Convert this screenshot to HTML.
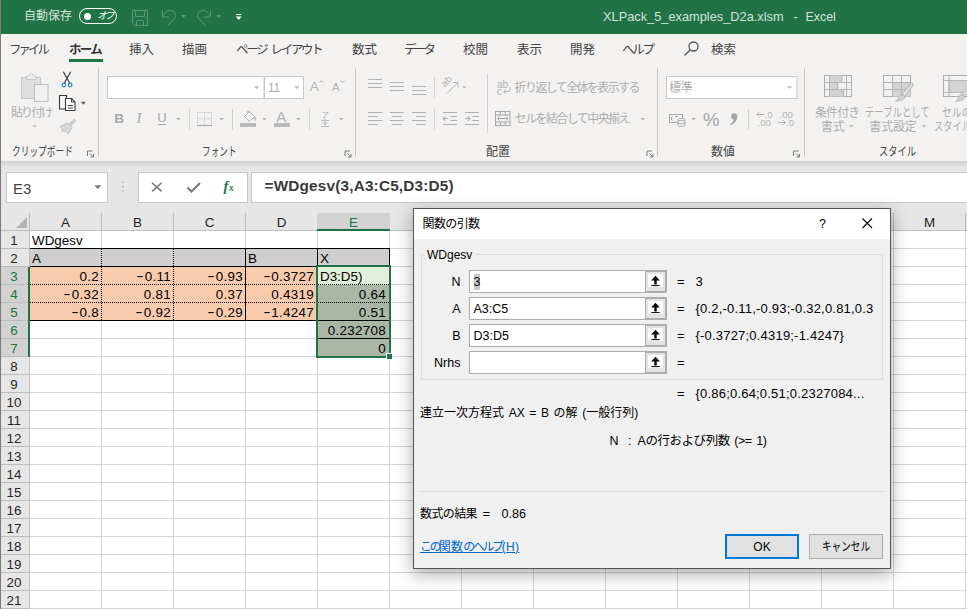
<!DOCTYPE html>
<html lang="ja">
<head>
<meta charset="utf-8">
<title>XLPack_5_examples_D2a.xlsm - Excel</title>
<style>
*{box-sizing:border-box;margin:0;padding:0}
html,body{width:967px;height:609px;overflow:hidden;background:#fff}
body{position:relative;font-family:"Liberation Sans","Noto Sans CJK JP",sans-serif;font-size:12px;color:#444}
.abs{position:absolute}
#win{position:absolute;left:0;top:0;width:967px;height:609px;overflow:hidden;background:#fff}
#lborder{position:absolute;left:0;top:0;width:1px;height:609px;background:#7b7b7b;z-index:50}
/* title bar */
#title{position:absolute;left:0;top:0;width:967px;height:34px;background:#217346;color:#d5e6dc}
#title .t{position:absolute;white-space:nowrap;font-size:12px;line-height:14px}
/* tabs */
#tabs{position:absolute;left:0;top:34px;width:967px;height:28px;background:#f3f2f1}
#tabs span{position:absolute;top:9px;font-size:12.5px;line-height:15px;color:#444;white-space:nowrap}
#tabs span.k{letter-spacing:-3px}
/* ribbon */
#ribbon{position:absolute;left:0;top:62px;width:967px;height:99px;background:#f3f2f1}
#ribbon .rt{position:absolute;font-size:12px;line-height:16px;color:#444;white-space:nowrap;transform-origin:0 50%;display:inline-block}
#ribbon .dim{color:#adadad}
/* formula bar */
#fbar{position:absolute;left:0;top:161px;width:967px;height:52px;background:#e6e6e6}
#fshadow{position:absolute;left:0;top:0;width:967px;height:6px;background:linear-gradient(#cfcfcf,#e6e6e6)}
.fbox{position:absolute;top:11px;height:31px;background:#fff;border:1px solid #c8c8c8}
/* sheet */
#sheet{position:absolute;left:0;top:213px;width:967px;height:396px;background:#fff;font-family:"Liberation Sans","IPAGothic","Noto Sans CJK JP",sans-serif;font-size:13.4px;color:#000}
#colhead{position:absolute;left:0;top:0;width:967px;height:18px;background:#e6e6e6;border-bottom:1px solid #bfbfbf}
#colhead i{position:absolute;top:0;width:1px;height:17px;background:#bcbcbc}
#colhead b{position:absolute;top:0;height:17px;width:71px;text-align:center;font-weight:normal;line-height:20px;color:#262626}
#colhead b.sel{background:#d2d2d2;color:#217346;border-bottom:2px solid #217346;height:18px;margin-left:-1px;width:73px;z-index:2}
#corner{position:absolute;left:16px;top:4px;width:0;height:0;border-left:11px solid transparent;border-bottom:11px solid #b4b4b4}
#rowhead{position:absolute;left:0;top:18px;width:30px;height:378px;background:#e6e6e6;border-right:1px solid #bfbfbf;
 background-image:linear-gradient(to bottom,transparent 17px,#bcbcbc 17px);background-size:100% 18px}
#rowhead b{position:absolute;left:0;width:28px;height:17px;text-align:center;font-weight:normal;line-height:20px;color:#262626}
#rowhead b.sel{background:#d2d2d2;color:#217346;width:30px;padding-right:2px}
#cells{position:absolute;left:30px;top:18px;width:937px;height:378px;background-color:#fff;
 background-image:linear-gradient(to right,transparent 71px,#d4d4d4 71px),linear-gradient(to bottom,transparent 17px,#d4d4d4 17px);background-size:72px 100%,100% 18px}
#cells .c{position:absolute;height:17px;line-height:20px;white-space:nowrap;overflow:hidden;padding:0 3px 0 2px}
#cells .r{text-align:right;letter-spacing:.3px}
#cells .m{font-style:normal;display:inline-block;position:relative;top:-1px;transform:scaleX(1.700);margin:0 1.700px 0 1.500px}
#cells .ln{position:absolute;background:#000}
#cells .dv{position:absolute;width:1px;background-image:linear-gradient(to bottom,#000 1px,transparent 1px);background-size:1px 2px}
#cells .dh{position:absolute;height:1px;background-image:linear-gradient(to right,#000 1px,transparent 1px);background-size:2px 1px}
/* dialog */
#dlg{position:absolute;left:413px;top:208px;width:478px;height:361px;background:#f0f0f0;border:1px solid #555;box-shadow:0 5px 16px 1px rgba(0,0,0,.3);color:#000;z-index:20;font-size:12px}
#dlg .tb{position:absolute;left:0;top:0;width:476px;height:30px;background:#fff}
#dlg .x{position:absolute;white-space:nowrap;line-height:16px}
#dlg .v{font-size:13px;letter-spacing:.2px}
#dlg .gb{position:absolute;left:7px;top:45px;width:462px;height:126px;border:1px solid #dcdcdc}
#dlg .lg{position:absolute;left:10px;top:38px;padding:0 3px 0 3px;background:#f0f0f0;line-height:16px;font-size:12px}
#dlg .lb{position:absolute;left:0;width:46.500px;text-align:right;line-height:16px;font-size:12.500px}
#dlg .in{position:absolute;left:55px;width:198px;height:23px;background:#fff;border:1px solid #ababab}
#dlg .in b{position:absolute;right:-1px;top:-1px;width:22px;height:23px;background:#e3e3e3;border:1px solid #adadad;border-width:2px 2px 2px 1px}
#dlg .in b i{position:absolute;left:2px;top:2px;width:15px;height:13px;background:#fff}
#dlg .in span{position:absolute;left:3.500px;top:3px;line-height:16px;font-size:12.500px;white-space:nowrap}
#dlg .eq{position:absolute;left:263px;line-height:16px;font-size:13px}
#dlg .btn{position:absolute;top:325px;width:74px;height:25px;background:#e1e1e1;border:1px solid #adadad;text-align:center;line-height:25px;font-size:12px}
</style>
</head>
<body>
<div id="win">
  <div id="title">
    <span class="t" style="left:24px;top:9px;color:#d3e3da">自動保存</span>
    <div class="abs" style="left:79px;top:8px;width:38px;height:16px;border:1px solid #fff;border-radius:8px"></div>
    <div class="abs" style="left:83.500px;top:12.500px;width:7px;height:7px;border-radius:3.500px;background:#fff"></div>
    <span class="t" style="left:97px;top:10px;font-size:10px;line-height:12px;color:#fff;font-style:italic;letter-spacing:-2.500px">オフ</span>
    <svg class="abs" style="left:0;top:0" width="260" height="33" viewBox="0 0 260 33" fill="none" stroke="#5a9777" stroke-width="1">
      <path d="M132.500 10.500h15v15h-13l-2-2z"/><path d="M135.500 10.500v6h9v-6M136.500 25.500v-5h7v5"/>
      <path d="M162.500 10.500v6.500h6.500"/><path d="M162.800 16.800c1.500-3.600 4-6.300 7-6.300 3 0 5.700 2.200 5.700 5 0 2-1 3-2 4l-6 6"/>
      <path d="M181 15h5l-2.500 3z" fill="#5a9777" stroke="none"/>
      <path d="M210.500 10.500v6.500h-6.500"/><path d="M210.200 16.800c-1.500-3.600-4-6.300-7-6.300-3 0-5.700 2.200-5.700 5 0 2 1 3 2 4l6 6"/>
      <path d="M216.300 15h5l-2.500 3z" fill="#5a9777" stroke="none"/>
      <path d="M236 14.500h5.500" stroke="#fff"/><path d="M235.800 16.500h5.900l-2.950 3.600z" fill="#fff" stroke="none"/>
    </svg>
    <span class="t" id="tfn" style="left:603px;top:9px;font-size:12.800px;line-height:16px;color:#d3e3da">XLPack_5_examples_D2a.xlsm</span>
    <span class="t" style="left:793.500px;top:9px;font-size:13px;line-height:16px;color:#d3e3da">-</span>
    <span class="t" id="tex" style="left:805.500px;top:9px;font-size:12.400px;line-height:16px;color:#d3e3da">Excel</span>
  </div>
  <div id="tabs">
    <span style="left:9px" class="k">ファイル</span>
    <span style="left:69px;font-weight:bold;color:#333;letter-spacing:-1.75px">ホーム</span>
    <div class="abs" style="left:69px;top:25px;width:34px;height:3px;background:#217346"></div>
    <span style="left:129px">挿入</span>
    <span style="left:182px">描画</span>
    <span style="left:236px;letter-spacing:-2.300px;word-spacing:3px">ページ レイアウト</span>
    <span style="left:352px">数式</span>
    <span style="left:404px;letter-spacing:-2.75px">データ</span>
    <span style="left:463px">校閲</span>
    <span style="left:517px">表示</span>
    <span style="left:570px">開発</span>
    <span style="left:622px;letter-spacing:-2.25px">ヘルプ</span>
    <svg class="abs" style="left:683px;top:6px" width="18" height="18" viewBox="0 0 18 18" fill="none" stroke="#555" stroke-width="1.3"><circle cx="10.500" cy="6.500" r="4.500"/><path d="M7.300 9.800L1.500 15.500"/></svg>
    <span style="left:711px">検索</span>
  </div>
  <div id="ribbon">
<svg class="abs" style="left:0;top:0" width="967" height="99" viewBox="0 62 967 99" fill="none" stroke-width="1" font-family="Liberation Sans, sans-serif">
<path d="M98.5 68.500V156.500" stroke="#c8c6c4"/>
<path d="M355.5 68.500V156.500" stroke="#c8c6c4"/>
<path d="M657.5 68.500V156.500" stroke="#c8c6c4"/>
<path d="M804.5 68.500V156.500" stroke="#c8c6c4"/>
<rect x="21.500" y="77.500" width="19" height="21" fill="#dfdfdf" stroke="#c6c6c6"/>
<path d="M26.500 79.500v-3.500h2.500a2.200 2.200 0 0 1 4.400 0h2.500v3.500z" fill="#eee" stroke="#c6c6c6"/>
<rect x="34.500" y="84.500" width="13.500" height="17" fill="#f1f1f1" stroke="#bcbcbc"/>
<path d="M32 125.2H37L34.5 127.8z" fill="#c4c4c4" stroke="none"/>
<path d="M63.300 71.800L69.800 83.300M70.700 71.800L64.200 83.300" stroke="#3b3b3b" stroke-width="1.200"/>
<circle cx="63.900" cy="85" r="1.800" stroke="#2b88d8" stroke-width="1.200"/><circle cx="70.100" cy="85" r="1.800" stroke="#2b88d8" stroke-width="1.200"/>
<path d="M66.500 98v-2.500h-7v13.500h5.500" stroke="#3b3b3b" stroke-width="1.100"/>
<path d="M65.500 98.500h6l3.500 3.500v8.500h-9.500z" fill="#fff" stroke="#3b3b3b" stroke-width="1.100"/><path d="M71.500 98.500v3.500h3.500M68 105.500h5M68 108h5" stroke="#3b3b3b"/>
<path d="M80.8 101.7H85.8L83.3 104.8z" fill="#5a5a5a" stroke="none"/>
<path d="M74.300 119.300l1.400 1.400-4.600 5-1.800-1.800z" fill="#d4d4d4" stroke="#bdbdbd"/><path d="M60 126.500l7.500-3.500 4.500 4.500-3.500 6c-2-.5-3-1.500-3.500-3-1 1-2 1-3 .5.500-1 .500-2-.5-3-.5-.5-1-1-1.500-1.500z" fill="#d8d8d8" stroke="#bdbdbd"/>
<path d="M87.5 156.0v-5h5M90 153.5l3.500 3.500m0-3v3h-3" stroke="#7a7a7a" fill="none"/>
<rect x="107.500" y="76.500" width="156.500" height="22" fill="#fff" stroke="#c8c8c8"/><rect x="264.500" y="76.500" width="39" height="22" fill="#fff" stroke="#c8c8c8"/>
<path d="M253.8 86.2H259.2L256.5 88.9z" fill="#b9b9b9" stroke="none"/>
<path d="M294.1 86.2H299.5L296.8 88.9z" fill="#b9b9b9" stroke="none"/>
<text x="310" y="90.700" font-size="13" fill="#b2b2b2" stroke="none">A</text><path d="M319.500 82.500l2-2 2 2" stroke="#b2b2b2"/>
<text x="332" y="90.700" font-size="11.500" fill="#b2b2b2" stroke="none">A</text><path d="M340.500 80.500l2 2 2-2" stroke="#b2b2b2"/>
<text x="114.300" y="122.500" font-size="13.500" font-weight="bold" fill="#a9a9a9" stroke="none">B</text>
<text x="136.500" y="122.500" font-size="15" font-style="italic" font-family="Liberation Serif, serif" fill="#a9a9a9" stroke="none">I</text>
<text x="157.300" y="122.300" font-size="13" fill="#a9a9a9" stroke="none">U</text><path d="M157.800 124.500h8.200" stroke="#a9a9a9"/>
<path d="M176 117.9H180.8L178.4 120.6z" fill="#b9b9b9" stroke="none"/>
<path d="M189.500 109V129.700M232.500 109V129.700M309.500 109V129.700" stroke="#d0d0d0"/>
<path d="M197.500 112.500h14M197.500 118.800h14M197.500 112.500v13M204.500 112.500v13M211.500 112.500v13" stroke="#c4c4c4" stroke-dasharray="1 1"/><path d="M197 125.500h15" stroke="#a8a8a8" stroke-width="1.200"/>
<path d="M219 117.9H224.2L221.6 120.6z" fill="#b9b9b9" stroke="none"/>
<rect x="240" y="123" width="16" height="4" fill="#b9b9b9" stroke="none"/>
<path d="M244.500 116.500l5-5 5 5-5 5z M247.500 113.500c-1.500-2.500 1.500-3.500 2-1M254.800 117c1.500 1.500 1.500 3 0 3.500-1.200-.5-1.200-2 0-3.500z" stroke="#b2b2b2"/>
<path d="M261.9 117.9H267L264.45 120.6z" fill="#b9b9b9" stroke="none"/>
<text x="276.300" y="122" font-size="15" fill="#b2b2b2" stroke="none">A</text><rect x="274" y="123" width="16" height="4" fill="#b9b9b9" stroke="none"/>
<path d="M295.8 117.9H300.9L298.35 120.6z" fill="#b9b9b9" stroke="none"/>
<text x="321.500" y="118" font-size="7.500" font-family="Noto Sans CJK JP, sans-serif" fill="#b2b2b2" stroke="none">ア</text><path d="M321 120.500h8M322.500 123h5M321 126.500h8M325 119v7.500" stroke="#bcbcbc"/>
<path d="M338.8 117.9H343.9L341.35 120.6z" fill="#b9b9b9" stroke="none"/>
<path d="M345.0 156.0v-5h5M347.5 153.5l3.500 3.500m0-3v3h-3" stroke="#7a7a7a" fill="none"/>
<path d="M368 79.500h14M368 83.500h14M368 87.500h14 M390 82.500h14M390 86.500h14M390 90.500h14 M412 86.500h14M412 90.500h14M412 94.500h14" stroke="#b0b0b0" stroke-width="1.100"/>
<path d="M434.500 77.400V97.600M434.500 109V129.600" stroke="#d0d0d0"/><path d="M487.500 74V132.800" stroke="#d0d0d0"/>
<text transform="translate(444.800 87.500) rotate(-45)" font-size="10" fill="#b2b2b2" stroke="none">ab</text><path d="M447 93.500L457.500 83M453 82.500h5v5" stroke="#b2b2b2"/>
<path d="M462 86.2H466.8L464.4 88.6z" fill="#b9b9b9" stroke="none"/>
<text x="497" y="87.500" font-size="10" fill="#b2b2b2" stroke="none">ab</text><text x="497" y="95" font-size="10" fill="#b2b2b2" stroke="none">c</text><path d="M510 87v2.500a2 2 0 0 1-2 2h-4.500m2.200-2.200l-2.200 2.200 2.200 2.200" stroke="#b2b2b2"/>
<path d="M368 112.500h14M368 116.500h10M368 120.500h14M368 124.500h10 M390 112.500h14M392 116.500h10M390 120.500h14M392 124.500h10 M412 112.500h14M416 116.500h10M412 120.500h14M416 124.500h10" stroke="#b0b0b0" stroke-width="1.100"/>
<path d="M443 112.500h14M450.500 116.500h6.500M450.500 120.500h6.500M443 124.500h14M448 118.500h-5m2.200-2.200l-2.200 2.200 2.200 2.200 M465 112.500h14M472.500 116.500h6.500M472.500 120.500h6.500M465 124.500h14M465 118.500h5m-2.200-2.200l2.200 2.200-2.200 2.200" stroke="#b0b0b0" stroke-width="1.100"/>
<rect x="495.500" y="111.500" width="14.500" height="14" stroke="#a6a6a6"/><path d="M495.500 115h14.500M495.500 122h14.500M500.300 111.500v3.500M505.300 111.500v3.500M500.300 122v3.500M505.300 122v3.500M497.500 118.500h10.500m-8.500-2l-2 2 2 2m6.500-4l2 2-2 2" stroke="#a6a6a6"/>
<path d="M640.5 117.9H645.5L643.0 120.6z" fill="#b9b9b9" stroke="none"/>
<path d="M647.0 156.0v-5h5M649.5 153.5l3.500 3.500m0-3v3h-3" stroke="#7a7a7a" fill="none"/>
<rect x="666.500" y="76.500" width="130.500" height="22" fill="#fff" stroke="#c8c8c8"/>
<path d="M787 86.2H792L789.5 88.8z" fill="#b9b9b9" stroke="none"/>
<rect x="669.500" y="114.500" width="13" height="8" stroke="#a9a9a9"/><path d="M672.500 117h-1v3h1M675 116.500h3" stroke="#a9a9a9"/><path d="M678 119.500v5.500c0 1.800 7 1.800 7 0v-5.500" fill="#f3f2f1" stroke="#a9a9a9"/><ellipse cx="681.500" cy="119.500" rx="3.500" ry="1.300" fill="#f3f2f1" stroke="#a9a9a9"/><path d="M678 122.300c0 1.800 7 1.800 7 0" stroke="#a9a9a9"/>
<path d="M691.2 118.1H696L693.6 120.6z" fill="#b9b9b9" stroke="none"/>
<text x="703" y="125.600" font-size="18.500" fill="#a3a3a3" stroke="none">%</text>
<path d="M734 113.200a3.300 3.300 0 0 1 3.300 3.500c0 4-3 7-6.800 8.200l-.5-1c2.300-1 3.600-2.500 3.800-4.200a3.300 3.300 0 0 1 .2-6.500z" fill="#a3a3a3" stroke="none"/>
<path d="M748.500 109.300V129.700" stroke="#d0d0d0"/>
<path d="M757 114.500h7.500m-5-2.700l-2.700 2.700 2.700 2.700 M778 122.500h7.500m-2.700-2.700l2.700 2.700-2.700 2.700" stroke="#b2b2b2"/>
<text x="764.500" y="118.300" font-size="9.500" fill="#b2b2b2" stroke="none">.0</text><text x="757.500" y="126" font-size="9.500" fill="#b2b2b2" stroke="none">.00</text><text x="779.500" y="118.300" font-size="9.500" fill="#b2b2b2" stroke="none">.00</text><text x="786" y="126" font-size="9.500" fill="#b2b2b2" stroke="none">.0</text>
<path d="M793.5 156.0v-5h5M796 153.5l3.500 3.500m0-3v3h-3" stroke="#7a7a7a" fill="none"/>
<rect x="824.500" y="75.500" width="27" height="21" fill="#f2f2f2" stroke="#adadad"/><path d="M829.500 75.500h12.500v7h-12.500zM829.500 82.500h8.200v7h-8.200zM829.500 89.500h14v7h-14z" fill="#d2d2d2" stroke="none"/><path d="M824.500 82.500h27M824.500 89.500h27M829.500 75.500v21M846.500 75.500v21M842 75.500v7M837.700 82.500v7M843.500 89.500v7" stroke="#b4b4b4"/>
<rect x="883.500" y="75.500" width="27" height="21" fill="#f2f2f2" stroke="#adadad"/><rect x="892.500" y="82.500" width="18" height="14" fill="#d4d4d4" stroke="none"/><path d="M883.500 82.500h27M883.500 89.500h27M892.500 75.500v21M901.500 75.500v21" stroke="#b4b4b4"/><path d="M912.5 83c1 1 .5 2.500-.5 4l-7 9.500-3-2.500 8-9c1-1.200 1.800-2 2.500-2z" fill="#e0e0e0" stroke="#b4b4b4"/><path d="M902 94.500l3 2.500c-1 3-4.500 4.500-9.500 4 2.500-1 2.500-2 3-3.500s1.500-2.800 3.500-3z" fill="#cfcfcf" stroke="#b9b9b9"/>
<rect x="943.500" y="75.500" width="27" height="21" fill="#f2f2f2" stroke="#adadad"/><rect x="949" y="80.500" width="22" height="12" fill="#d4d4d4" stroke="#b4b4b4"/><path d="M943.500 80.500h27M943.500 92.500h27M949 75.500v21" stroke="#b4b4b4"/><path d="M972.5 83c1 1 .5 2.500-.5 4l-7 9.500-3-2.500 8-9c1-1.200 1.800-2 2.500-2z" fill="#e0e0e0" stroke="#b4b4b4"/><path d="M962 94.500l3 2.500c-1 3-4.500 4.500-9.500 4 2.500-1 2.500-2 3-3.500s1.500-2.800 3.500-3z" fill="#cfcfcf" stroke="#b9b9b9"/>
<path d="M849 125.1H853.8L851.4 127.5z" fill="#b9b9b9" stroke="none"/>
<path d="M921.5 125.1H926.3L923.9 127.5z" fill="#b9b9b9" stroke="none"/>
</svg>
<span class="rt dim" style="left:11px;top:42.7px;letter-spacing:-1.9px;">貼り付け</span>
<span class="rt" style="left:11.5px;top:82.30000000000001px;transform:scaleX(0.725);">クリップボード</span>
<span class="rt" style="left:201.5px;top:82.30000000000001px;transform:scaleX(0.72);">フォント</span>
<span class="rt dim" style="left:268px;top:17.5px;letter-spacing:-0.3px;">11</span>
<span class="rt dim" style="left:514.5px;top:18.299999999999997px;letter-spacing:-1.6px;">折り返して全体を表示する</span>
<span class="rt dim" style="left:514.5px;top:48.8px;letter-spacing:-1.55px;">セルを結合して中央揃え</span>
<span class="rt" style="left:485.9px;top:82.30000000000001px;">配置</span>
<span class="rt dim" style="left:669px;top:17.5px;letter-spacing:-0.3px;">標準</span>
<span class="rt" style="left:711px;top:82.30000000000001px;">数値</span>
<span class="rt dim" style="left:815px;top:42.599999999999994px;letter-spacing:-0.9px;">条件付き</span>
<span class="rt dim" style="left:821px;top:57.2px;letter-spacing:-0.2px;">書式</span>
<span class="rt dim" style="left:865px;top:42.599999999999994px;transform:scaleX(0.78);">テーブルとして</span>
<span class="rt dim" style="left:869.3px;top:57.2px;letter-spacing:-0.15px;">書式設定</span>
<span class="rt dim" style="left:942.3px;top:42.599999999999994px;transform:scaleX(0.82);">セルの</span>
<span class="rt dim" style="left:933.7px;top:57.2px;transform:scaleX(0.77);">スタイル</span>
<span class="rt" style="left:879px;top:82.30000000000001px;transform:scaleX(0.77);">スタイル</span>
</div>
  <div id="fbar"><div id="fshadow"></div>
    <div class="fbox" style="left:6px;width:102px"></div>
    <span class="abs" style="left:13px;top:19px;font-size:15px;line-height:18px;color:#444">E3</span>
    <div class="fbox" style="left:138px;width:110px"></div>
    <div class="fbox" style="left:251px;width:720px"></div>
    <svg class="abs" style="left:0;top:0" width="260" height="52" viewBox="0 161 260 52" fill="none">
      <path d="M94.300 185.300h7l-3.500 3.800z" fill="#777"/>
      <path d="M122 181.500h1.600v1.600h-1.600zM122 185.700h1.600v1.600h-1.600zM122 189.900h1.600v1.600h-1.600z" fill="#b5b5b5"/>
      <path d="M152 182.700l9.700 8.700M161.700 182.700l-9.700 8.700" stroke="#787878" stroke-width="1.500"/>
      <path d="M187.500 187.500l4 4 8.500-8.500" stroke="#787878" stroke-width="2"/>
      <text x="223.500" y="190.500" font-family="Liberation Serif, serif" font-style="italic" font-weight="bold" font-size="14.500" fill="#217346">f</text>
      <text x="229" y="191" font-family="Liberation Serif, serif" font-style="italic" font-weight="bold" font-size="9.500" fill="#217346">x</text>
    </svg>
    <span id="ftext" class="abs" style="left:264.500px;top:16px;font-size:15.300px;line-height:18px;font-weight:bold;color:#3a3a3a;white-space:nowrap;letter-spacing:.2px">=WDgesv(3,A3:C5,D3:D5)</span>
  </div>
  <div id="sheet">
<div id="colhead"><div id="corner"></div>
<i style="left:29px"></i>
<b style="left:30px">A</b><i style="left:101px"></i>
<b style="left:102px">B</b><i style="left:173px"></i>
<b style="left:174px">C</b><i style="left:245px"></i>
<b style="left:246px">D</b><i style="left:317px"></i>
<b class="sel" style="left:318px">E</b><i style="left:389px"></i>
<b style="left:390px">F</b><i style="left:461px"></i>
<b style="left:462px">G</b><i style="left:533px"></i>
<b style="left:534px">H</b><i style="left:605px"></i>
<b style="left:606px">I</b><i style="left:677px"></i>
<b style="left:678px">J</b><i style="left:749px"></i>
<b style="left:750px">K</b><i style="left:821px"></i>
<b style="left:822px">L</b><i style="left:893px"></i>
<b style="left:894px">M</b><i style="left:965px"></i>
</div>
<div id="rowhead"><div style="position:absolute;left:28px;top:36px;width:2px;height:90px;background:#217346;z-index:2"></div>
<b style="top:0px">1</b>
<b style="top:18px">2</b>
<b class="sel" style="top:36px">3</b>
<b class="sel" style="top:54px">4</b>
<b class="sel" style="top:72px">5</b>
<b class="sel" style="top:90px">6</b>
<b class="sel" style="top:108px">7</b>
<b style="top:126px">8</b>
<b style="top:144px">9</b>
<b style="top:162px">10</b>
<b style="top:180px">11</b>
<b style="top:198px">12</b>
<b style="top:216px">13</b>
<b style="top:234px">14</b>
<b style="top:252px">15</b>
<b style="top:270px">16</b>
<b style="top:288px">17</b>
<b style="top:306px">18</b>
<b style="top:324px">19</b>
<b style="top:342px">20</b>
<b style="top:360px">21</b>
</div>
<div id="cells">
<div class="c" style="left:0px;top:0px;width:71px;">WDgesv</div>
<div class="c" style="left:0px;top:18px;width:72px;background:#d0cece;">A</div>
<div class="c" style="left:72px;top:18px;width:72px;background:#d0cece;"></div>
<div class="c" style="left:144px;top:18px;width:71px;background:#d0cece;"></div>
<div class="c" style="left:216px;top:18px;width:71px;background:#d0cece;">B</div>
<div class="c" style="left:288px;top:18px;width:71px;background:#d0cece;">X</div>
<div class="c r" style="left:0px;top:36px;width:72px;background:#f8cbad;height:18px;">0.2</div>
<div class="c r" style="left:72px;top:36px;width:72px;background:#f8cbad;height:18px;"><i class="m">-</i>0.11</div>
<div class="c r" style="left:144px;top:36px;width:72px;background:#f8cbad;height:18px;"><i class="m">-</i>0.93</div>
<div class="c r" style="left:216px;top:36px;width:71px;background:#f8cbad;height:18px;"><i class="m">-</i>0.3727</div>
<div class="c r" style="left:0px;top:54px;width:72px;background:#f8cbad;height:18px;"><i class="m">-</i>0.32</div>
<div class="c r" style="left:72px;top:54px;width:72px;background:#f8cbad;height:18px;">0.81</div>
<div class="c r" style="left:144px;top:54px;width:72px;background:#f8cbad;height:18px;">0.37</div>
<div class="c r" style="left:216px;top:54px;width:71px;background:#f8cbad;height:18px;">0.4319</div>
<div class="c r" style="left:0px;top:72px;width:72px;background:#f8cbad;"><i class="m">-</i>0.8</div>
<div class="c r" style="left:72px;top:72px;width:72px;background:#f8cbad;"><i class="m">-</i>0.92</div>
<div class="c r" style="left:144px;top:72px;width:72px;background:#f8cbad;"><i class="m">-</i>0.29</div>
<div class="c r" style="left:216px;top:72px;width:71px;background:#f8cbad;"><i class="m">-</i>1.4247</div>
<div class="c" style="left:288px;top:36px;width:71px;background:#e2efda;height:18px;">D3:D5)</div>
<div class="c r" style="left:288px;top:54px;width:71px;background:#abb6a5;height:18px;">0.64</div>
<div class="c r" style="left:288px;top:72px;width:71px;background:#abb6a5;height:18px;">0.51</div>
<div class="c r" style="left:288px;top:90px;width:71px;background:#abb6a5;height:18px;">0.232708</div>
<div class="c r" style="left:288px;top:108px;width:71px;background:#abb6a5;">0</div>
<div class="ln" style="left:0px;top:17px;width:360px;height:1px"></div>
<div class="ln" style="left:0px;top:35px;width:360px;height:1px"></div>
<div class="ln" style="left:0px;top:89px;width:288px;height:1px"></div>
<div class="ln" style="left:215px;top:17px;width:1px;height:73px"></div>
<div class="ln" style="left:287px;top:17px;width:1px;height:73px"></div>
<div class="ln" style="left:359px;top:17px;width:1px;height:19px"></div>
<div class="dv" style="left:71px;top:18px;height:71px"></div>
<div class="dv" style="left:143px;top:18px;height:71px"></div>
<div class="dh" style="left:0px;top:53px;width:359px"></div>
<div class="dh" style="left:0px;top:71px;width:359px"></div>
<div class="ln" style="left:288px;top:89px;width:71px;height:1px"></div>
<div class="ln" style="left:288px;top:107px;width:71px;height:1px"></div>
<div style="position:absolute;left:286px;top:34px;width:75px;height:93px;border:2px solid #217346"></div>
<div style="position:absolute;left:356px;top:122px;width:7px;height:7px;background:#217346;border:1px solid #fff"></div>
</div></div>
  <div id="dlg"><div class="tb"></div>
<div class="x" style="left:8.500px;top:7px;font-size:12px;letter-spacing:-.6px">関数の引数</div>
<div class="x" style="left:405px;top:7px;font-size:12.500px">?</div>
<svg class="abs" style="left:448px;top:9px" width="11" height="11" viewBox="0 0 11 11"><path d="M.5 .5l9.500 9.500M10 .5l-9.500 9.500" stroke="#000" stroke-width="1.100"/></svg>
<div class="gb"></div><div class="lg">WDgesv</div>
<div class="lb" style="top:65px">N</div><div class="in" style="top:61px"><span style="background:#c9c9c9;">3</span><b><i></i><svg class="abs" style="left:3px;top:3px" width="13" height="12" viewBox="0 0 13 12"><path d="M6.500 .800l4.300 4.600h-3.100v4h-2.400v-4h-3.100z" fill="#000"/><path d="M2.300 10.600h8.400" stroke="#000" stroke-width="1"/></svg></b></div><div class="eq" style="top:65px">=</div><div class="x v" style="left:281.500px;top:65px">3</div>
<div class="lb" style="top:92px">A</div><div class="in" style="top:88px"><span style="">A3:C5</span><b><i></i><svg class="abs" style="left:3px;top:3px" width="13" height="12" viewBox="0 0 13 12"><path d="M6.500 .800l4.300 4.600h-3.100v4h-2.400v-4h-3.100z" fill="#000"/><path d="M2.300 10.600h8.400" stroke="#000" stroke-width="1"/></svg></b></div><div class="eq" style="top:92px">=</div><div class="x v" style="left:281.500px;top:92px">{0.2,-0.11,-0.93;-0.32,0.81,0.3</div>
<div class="lb" style="top:119px">B</div><div class="in" style="top:115px"><span style="">D3:D5</span><b><i></i><svg class="abs" style="left:3px;top:3px" width="13" height="12" viewBox="0 0 13 12"><path d="M6.500 .800l4.300 4.600h-3.100v4h-2.400v-4h-3.100z" fill="#000"/><path d="M2.300 10.600h8.400" stroke="#000" stroke-width="1"/></svg></b></div><div class="eq" style="top:119px">=</div><div class="x v" style="left:281.500px;top:119px">{-0.3727;0.4319;-1.4247}</div>
<div class="lb" style="top:146px">Nrhs</div><div class="in" style="top:142px"><b><i></i><svg class="abs" style="left:3px;top:3px" width="13" height="12" viewBox="0 0 13 12"><path d="M6.500 .800l4.300 4.600h-3.100v4h-2.400v-4h-3.100z" fill="#000"/><path d="M2.300 10.600h8.400" stroke="#000" stroke-width="1"/></svg></b></div><div class="eq" style="top:146px">=</div>
<div class="eq" style="top:177px">=</div><div class="x v" style="left:281.500px;top:177px">{0.86;0.64;0.51;0.2327084...</div>
<div class="x" style="left:6px;top:196px;font-size:12px;word-spacing:1.300px">連立一次方程式 AX = B の解 (一般行列)</div>
<div class="x" style="left:195.500px;top:224px;font-size:12.500px">N</div><div class="x" style="left:214px;top:224px;font-size:12.500px">:</div><div class="x" style="left:223.500px;top:224px;font-size:12.500px;letter-spacing:-.45px;word-spacing:1.500px">Aの行および列数 (&gt;= 1)</div>
<div class="abs" style="left:6px;top:282px;width:464px;height:1px;background:#dcdcdc"></div>
<div class="x" style="left:6px;top:297px;font-size:12px;letter-spacing:-.6px">数式の結果</div><div class="x" style="left:68.500px;top:297px;font-size:13px">=</div><div class="x" style="left:87.500px;top:297px;font-size:12.500px">0.86</div>
<div class="x" style="left:6px;top:330px;font-size:12px;color:#0066cc;text-decoration:underline"><span style="letter-spacing:-2.600px">この</span><span style="letter-spacing:.2px">関数</span><span style="letter-spacing:-2.400px">のヘルプ</span><span style="letter-spacing:.4px">(H)</span></div>
<div class="btn" style="left:311px;border:2px solid #0078d7;line-height:23px">OK</div>
<div class="btn" style="left:395px"><span style="display:inline-block;transform:scaleX(.8)">キャンセル</span></div>
</div>
  <div id="lborder"></div>
</div>
</body>
</html>
